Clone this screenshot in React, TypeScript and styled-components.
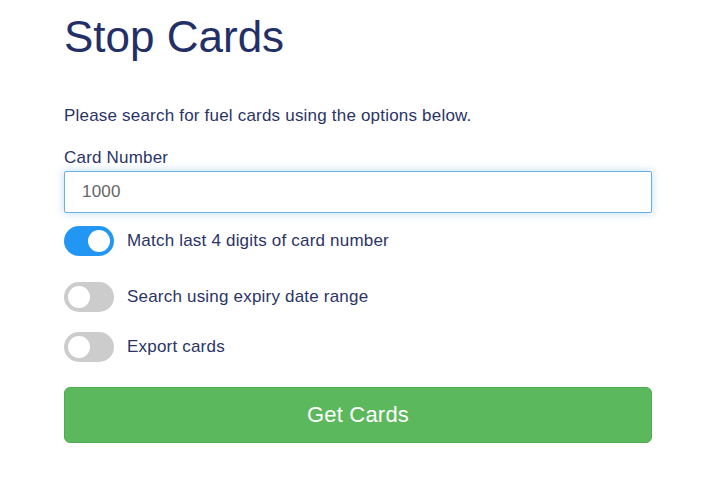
import React, { useEffect, useRef, useState } from "react";
import styled, { createGlobalStyle } from "styled-components";

const Global = createGlobalStyle`
  html, body { margin: 0; padding: 0; background: #fff; }
  body { font-family: "Liberation Sans", Arial, sans-serif; color: #2b3466; }
  * { box-sizing: border-box; }
`;

const Page = styled.div`
  width: 588px;
  margin-left: 64px;
  padding-top: 13px;
  display: flex;
  flex-direction: column;
`;

const Title = styled.h1`
  margin: 0;
  font-size: 44px;
  line-height: 48px;
  font-weight: 400;
  color: #233068;
`;

const Body = `
  font-size: 17px;
  letter-spacing: 0.2px;
  line-height: 24px;
`;

const Intro = styled.p`
  margin: 43px 0 0;
  ${Body}
`;

const Label = styled.label`
  margin-top: 18px;
  ${Body}
`;

const Input = styled.input`
  margin-top: 1px;
  height: 42px;
  width: 100%;
  padding: 0 17px;
  font-family: "Liberation Sans", Arial, sans-serif;
  font-size: 17px;
  letter-spacing: 0.2px;
  color: #666;
  caret-color: #333;
  border: 1px solid #66afe9;
  border-radius: 2px;
  outline: none;
  box-shadow: 0 0 8px rgba(102, 175, 233, 0.45);
`;

const Toggles = styled.div`
  display: flex;
  flex-direction: column;
  margin-top: 13px;
`;

const Row = styled.label<{ $gap: number }>`
  display: flex;
  align-items: center;
  gap: 13px;
  height: 30px;
  margin-bottom: ${(p) => p.$gap}px;
  ${Body}
  cursor: pointer;
`;

const Track = styled.span<{ $on: boolean }>`
  position: relative;
  flex: none;
  width: 50px;
  height: 30px;
  border-radius: 15px;
  background: ${(p) => (p.$on ? "#2196f3" : "#cccccc")};
  &::after {
    content: "";
    position: absolute;
    top: 4px;
    left: ${(p) => (p.$on ? "24px" : "4px")};
    width: 22px;
    height: 22px;
    border-radius: 50%;
    background: #fff;
  }
`;

const Button = styled.button`
  margin-top: 25px;
  height: 56px;
  width: 100%;
  background: #5cb85c;
  border: 1px solid #4cae4c;
  border-radius: 6px;
  color: #fff;
  font-family: "Liberation Sans", Arial, sans-serif;
  font-size: 22px;
  letter-spacing: 0.2px;
  cursor: pointer;
`;

const toggles = [
  { label: "Match last 4 digits of card number", on: true, gap: 26 },
  { label: "Search using expiry date range", on: false, gap: 20 },
  { label: "Export cards", on: false, gap: 0 },
];

export default function App() {
  const ref = useRef<HTMLInputElement>(null);
  const [state, setState] = useState(toggles.map((t) => t.on));
  useEffect(() => {
    const el = ref.current;
    if (el) {
      el.focus();
      el.setSelectionRange(4, 4);
    }
  }, []);
  return (
    <>
      <Global />
      <Page>
        <Title>Stop Cards</Title>
        <Intro>Please search for fuel cards using the options below.</Intro>
        <Label htmlFor="card">Card Number</Label>
        <Input id="card" ref={ref} defaultValue="1000" />
        <Toggles>
          {toggles.map((t, i) => (
            <Row
              key={t.label}
              $gap={t.gap}
              onClick={() => setState((s) => s.map((v, j) => (j === i ? !v : v)))}
            >
              <Track $on={state[i]} />
              {t.label}
            </Row>
          ))}
        </Toggles>
        <Button>Get Cards</Button>
      </Page>
    </>
  );
}
